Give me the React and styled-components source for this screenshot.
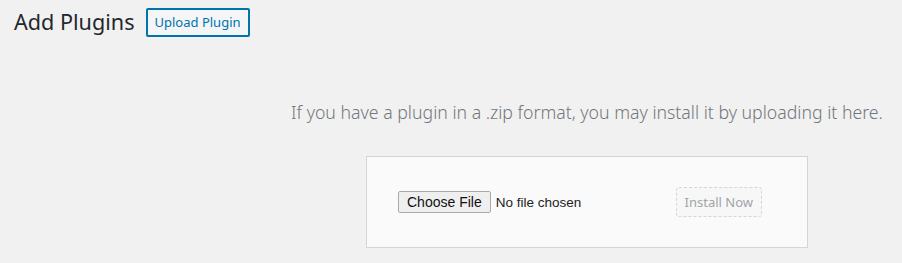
import React from 'react'
import styled, {createGlobalStyle} from 'styled-components'

const Global = createGlobalStyle`
  html, body {
    margin: 0;
    padding: 0;
    background: #f1f1f1;
  }
  body {
    font-family: 'Noto Sans', 'Open Sans', sans-serif;
    color: #444;
  }
`

const Wrap = styled.div`
  padding: 7px 0 0 14px;
  box-sizing: border-box;
  width: 902px;
  height: 263px;
  overflow: hidden;
`

const Header = styled.div`
  display: flex;
  align-items: center;
  gap: 11px;
  height: 30px;
`

const Title = styled.h1`
  margin: 0;
  font-size: 21.6px;
  font-weight: 400;
  line-height: 30px;
  color: #23282d;
`

const TitleAction = styled.a`
  display: inline-flex;
  align-items: center;
  height: 29px;
  box-sizing: border-box;
  padding: 0 7px;
  border: 2px solid #0073aa;
  border-radius: 2px;
  background: #f3f5f6;
  color: #0073aa;
  font-size: 13px;
  text-decoration: none;
  cursor: pointer;
`

const UploadSection = styled.div`
  padding-left: 258px;
  display: flex;
  flex-direction: column;
  align-items: center;
`

const Help = styled.p`
  margin: 63px 0 0;
  font-size: 17.7px;
  font-weight: 300;
  line-height: 24px;
  color: #72777c;
  white-space: nowrap;
`

const Form = styled.form`
  margin-top: 32px;
  width: 442px;
  height: 92px;
  box-sizing: border-box;
  padding: 30px 45px 30px 31px;
  display: flex;
  align-items: center;
  justify-content: space-between;
  background: #fafafa;
  border: 1px solid #d5d5d5;
`

const FileInput = styled.input`
  font-family: 'Liberation Sans', Arial, sans-serif;
  font-size: 13.5px;
  color: #222;
  width: 250px;

  &::file-selector-button {
    font-family: 'Liberation Sans', Arial, sans-serif;
    font-size: 14px;
    height: 22px;
    padding: 0 8px;
    margin-right: 5px;
    border: 1px solid #a9a9a9;
    border-radius: 2px;
    background: #efefef;
    color: #111;
  }
`

const Button = styled.button`
  height: 30px;
  padding: 0 8px;
  font-family: 'Noto Sans', 'Open Sans', sans-serif;
  font-size: 13px;
  border-radius: 3px;
  color: ${p => (p.disabled ? '#a0a5aa' : '#555')};
  background: #f7f7f7;
  border: 1px ${p => (p.disabled ? 'dashed #d6d6d6' : 'solid #ccc')};
`

export default function App() {
  return (
    <>
      <Global />
      <Wrap>
        <Header>
          <Title>Add Plugins</Title>
          <TitleAction>Upload Plugin</TitleAction>
        </Header>
        <UploadSection>
          <Help>If you have a plugin in a .zip format, you may install it by uploading it here.</Help>
          <Form onSubmit={e => e.preventDefault()}>
            <FileInput type="file" name="pluginzip" />
            <Button type="submit" disabled>Install Now</Button>
          </Form>
        </UploadSection>
      </Wrap>
    </>
  )
}
